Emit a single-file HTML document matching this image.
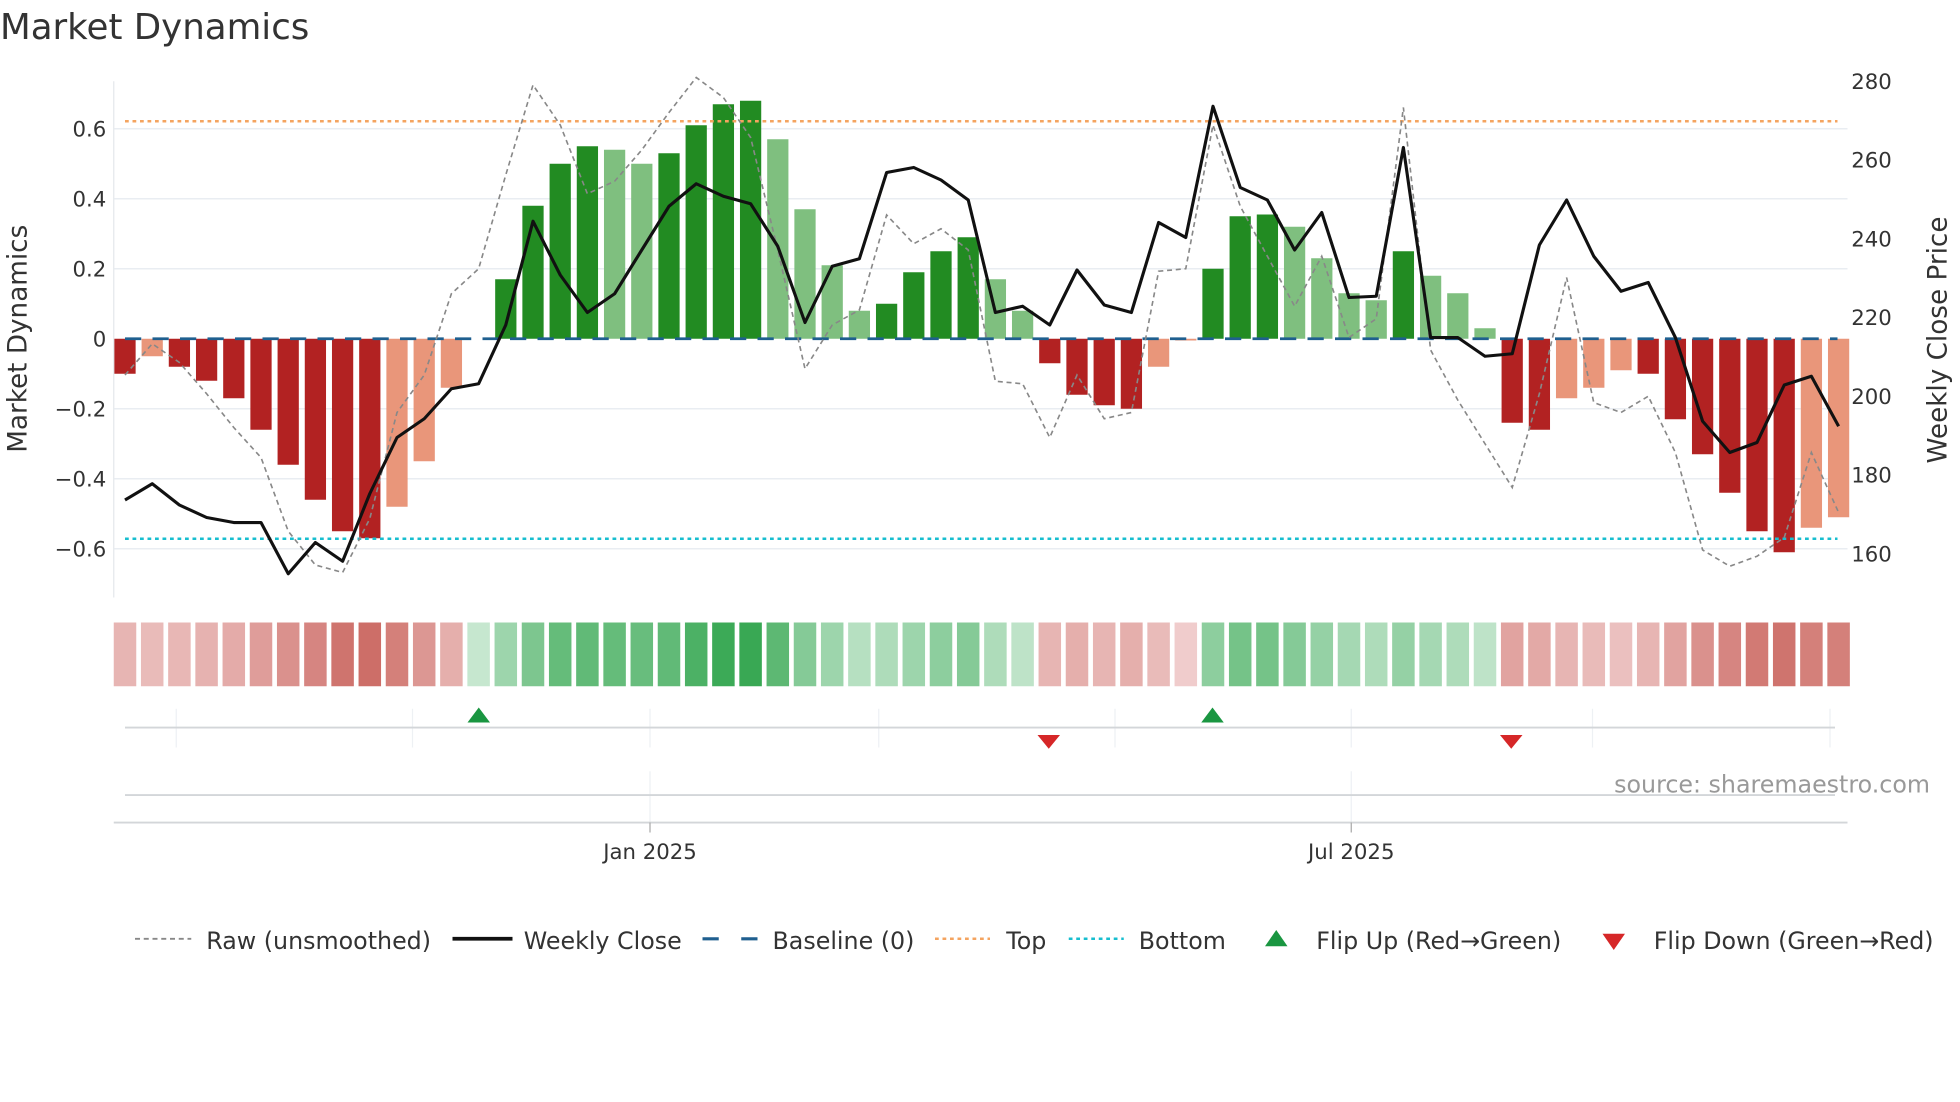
<!DOCTYPE html>
<html><head><meta charset="utf-8"><style>
html,body{margin:0;padding:0;background:#fff;}
svg{display:block;}
text{font-family:"DejaVu Sans","Liberation Sans",sans-serif;fill:#333;}
</style></head><body>
<svg id="s" width="1960" height="1102" viewBox="0 0 1568 881.6" xmlns="http://www.w3.org/2000/svg">
<rect width="1568" height="882" fill="#fff"/>
<text x="0" y="31" font-size="28.5">Market Dynamics</text>
<g id="grid" stroke="#e9edf2" stroke-width="1.2">
<line x1="91" x2="1478" y1="103" y2="103"/><line x1="91" x2="1478" y1="159" y2="159"/>
<line x1="91" x2="1478" y1="215" y2="215"/><line x1="91" x2="1478" y1="327" y2="327"/>
<line x1="91" x2="1478" y1="383" y2="383"/><line x1="91" x2="1478" y1="439" y2="439"/>
</g>
<line x1="91" x2="91" y1="65" y2="478" stroke="#e5e8ec" stroke-width="1"/>
<g font-size="17" text-anchor="end">
<text x="85" y="109">0.6</text><text x="85" y="165">0.4</text><text x="85" y="221">0.2</text>
<text x="85" y="277">0</text><text x="85" y="333">−0.2</text><text x="85" y="389">−0.4</text><text x="85" y="445">−0.6</text>
</g>
<g font-size="17">
<text x="1481" y="71">280</text><text x="1481" y="134">260</text><text x="1481" y="197">240</text>
<text x="1481" y="260">220</text><text x="1481" y="323">200</text><text x="1481" y="386">180</text><text x="1481" y="449">160</text>
</g>
<text font-size="21" transform="translate(21,271) rotate(-90)" text-anchor="middle">Market Dynamics</text>
<text font-size="21" transform="translate(1557,272) rotate(-90)" text-anchor="middle">Weekly Close Price</text>
<g id="bars"></g>
<line x1="100" x2="1470" y1="97" y2="97" stroke="#f4a460" stroke-width="2" stroke-dasharray="3,3"/>
<line x1="100" x2="1470" y1="431" y2="431" stroke="#17becf" stroke-width="2" stroke-dasharray="3,3"/>
<line x1="100" x2="1470" y1="271" y2="271" stroke="#1f5f8f" stroke-width="2.2" stroke-dasharray="13,9"/>
<polyline id="raw" fill="none" stroke="#888" stroke-width="1.3" stroke-dasharray="4,3"/>
<polyline id="close" fill="none" stroke="#111" stroke-width="2.5" stroke-linejoin="round"/>
<g id="strip"></g>
<g stroke="#eef1f4" stroke-width="1">
<line x1="141" x2="141" y1="567" y2="598"/><line x1="330" x2="330" y1="567" y2="598"/>
<line x1="520" x2="520" y1="567" y2="598"/><line x1="703" x2="703" y1="567" y2="598"/>
<line x1="892" x2="892" y1="567" y2="598"/><line x1="1081" x2="1081" y1="567" y2="598"/>
<line x1="1274" x2="1274" y1="567" y2="598"/><line x1="1464" x2="1464" y1="567" y2="598"/>
<line x1="520" x2="520" y1="617" y2="658"/><line x1="1081" x2="1081" y1="617" y2="658"/>
</g>
<line x1="100" x2="1468" y1="582" y2="582" stroke="#d3d6d9" stroke-width="1.5"/>
<polygon points="374,578 392,578 383,566" fill="#1a9641"/>
<polygon points="961,578 979,578 970,566" fill="#1a9641"/>
<polygon points="830,588 848,588 839,599" fill="#d62728"/>
<polygon points="1200,588 1218,588 1209,599" fill="#d62728"/>
<line x1="100" x2="1468" y1="636" y2="636" stroke="#d3d6d9" stroke-width="1.5"/>
<line x1="91" x2="1478" y1="658" y2="658" stroke="#d3d6d9" stroke-width="1.5"/>
<line x1="520" x2="520" y1="658" y2="666" stroke="#aaa"/><line x1="1081" x2="1081" y1="658" y2="666" stroke="#aaa"/>
<text x="520" y="687" font-size="17" text-anchor="middle">Jan 2025</text>
<text x="1081" y="687" font-size="17" text-anchor="middle">Jul 2025</text>
<text x="1544" y="634" font-size="19" text-anchor="end" style="fill:#999">source: sharemaestro.com</text>
<g font-size="19">
<line x1="108" x2="153" y1="751" y2="751" stroke="#888" stroke-width="1.5" stroke-dasharray="4,3"/>
<text x="165" y="759">Raw (unsmoothed)</text>
<line x1="362" x2="410" y1="751" y2="751" stroke="#111" stroke-width="3"/>
<text x="419" y="759">Weekly Close</text>
<line x1="562" x2="606" y1="751" y2="751" stroke="#1f5f8f" stroke-width="2.5" stroke-dasharray="13,18"/>
<text x="618" y="759">Baseline (0)</text>
<line x1="748" x2="792" y1="751" y2="751" stroke="#f4a460" stroke-width="2" stroke-dasharray="3,3"/>
<text x="805" y="759">Top</text>
<line x1="855" x2="899" y1="751" y2="751" stroke="#17becf" stroke-width="2" stroke-dasharray="3,3"/>
<text x="911" y="759">Bottom</text>
<polygon points="1012,757 1030,757 1021,744" fill="#1a9641"/>
<text x="1053" y="759">Flip Up (Red→Green)</text>
<polygon points="1282,747 1300,747 1291,760" fill="#d62728"/>
<text x="1323" y="759">Flip Down (Green→Red)</text>
</g>
</svg>
<script>
var NS="http://www.w3.org/2000/svg";
var vals=[-0.1,-0.05,-0.08,-0.12,-0.17,-0.26,-0.36,-0.46,-0.55,-0.57,-0.48,-0.35,-0.14,0.0,0.17,0.38,0.5,0.55,0.54,0.5,0.53,0.61,0.67,0.68,0.57,0.37,0.21,0.08,0.1,0.19,0.25,0.29,0.17,0.08,-0.07,-0.16,-0.19,-0.2,-0.08,-0.005,0.2,0.35,0.355,0.32,0.23,0.13,0.11,0.25,0.18,0.13,0.03,-0.24,-0.26,-0.17,-0.14,-0.09,-0.1,-0.23,-0.33,-0.44,-0.55,-0.61,-0.54,-0.51];
var strong=[1,0,1,1,1,1,1,1,1,1,0,0,0,1,1,1,1,1,0,0,1,1,1,1,0,0,0,0,1,1,1,1,0,0,1,1,1,1,0,0,1,1,1,0,0,0,0,1,0,0,0,1,1,0,0,0,1,1,1,1,1,1,0,0];
var inten=[.3,.25,.28,.32,.38,.5,.6,.7,.85,.9,.75,.55,.35,.1,.35,.55,.7,.72,.7,.68,.72,.85,.95,.97,.75,.5,.35,.2,.25,.35,.45,.5,.25,.15,.3,.35,.3,.35,.25,.1,.45,.6,.6,.5,.4,.3,.25,.4,.3,.25,.15,.45,.4,.3,.25,.2,.3,.45,.6,.7,.8,.85,.75,.75];
var close=[400,387,404,414,418,418,459,434,449,395,350,335,311,307,260,177,220,250,235,200,165,147,157,163,197,258,213,207,138,134,144,160,250,245,260,216,244,250,178,190,85,150,160,200,170,238,237,118,270,270,285,283,196,160,205,233,226,270,337,362,354,308,301,341];
var raw=[300,275,290,315,342,366,425,452,458,415,330,300,235,215,140,68,100,155,145,120,90,62,78,110,200,295,260,248,172,195,183,200,305,307,350,300,335,330,217,215,100,165,205,245,205,270,255,86,280,320,355,390,315,222,322,330,317,362,440,453,445,430,362,410];
function mix(a,b,t){return "rgb("+a.map(function(v,i){return Math.round(v+(b[i]-v)*t)}).join(",")+")";}
var bars=document.getElementById("bars"),strip=document.getElementById("strip");
var cp=[],rp=[];
for(var i=0;i<64;i++){
 var cx=100+i*21.76,v=vals[i];
 var r=document.createElementNS(NS,"rect");
 var y0=271,y1=271-280*v;
 r.setAttribute("x",cx-8.5);r.setAttribute("width",17);
 r.setAttribute("y",Math.min(y0,y1));r.setAttribute("height",Math.max(Math.abs(y1-y0),v===0?0:1));
 var pos=v>0||(v===0);
 r.setAttribute("fill",pos?(strong[i]?"#228b22":"#7fbf7f"):(strong[i]?"#b22222":"#e9967a"));
 bars.appendChild(r);
 var s=document.createElementNS(NS,"rect");
 s.setAttribute("x",cx-9);s.setAttribute("width",18);s.setAttribute("y",498);s.setAttribute("height",51);
 s.setAttribute("fill",pos?mix([214,238,221],[52,166,80],inten[i]):mix([244,216,216],[201,98,91],inten[i]));
 strip.appendChild(s);
 cp.push(cx.toFixed(1)+","+close[i]);rp.push(cx.toFixed(1)+","+raw[i]);
}
document.getElementById("close").setAttribute("points",cp.join(" "));
document.getElementById("raw").setAttribute("points",rp.join(" "));
</script>
</body></html>
